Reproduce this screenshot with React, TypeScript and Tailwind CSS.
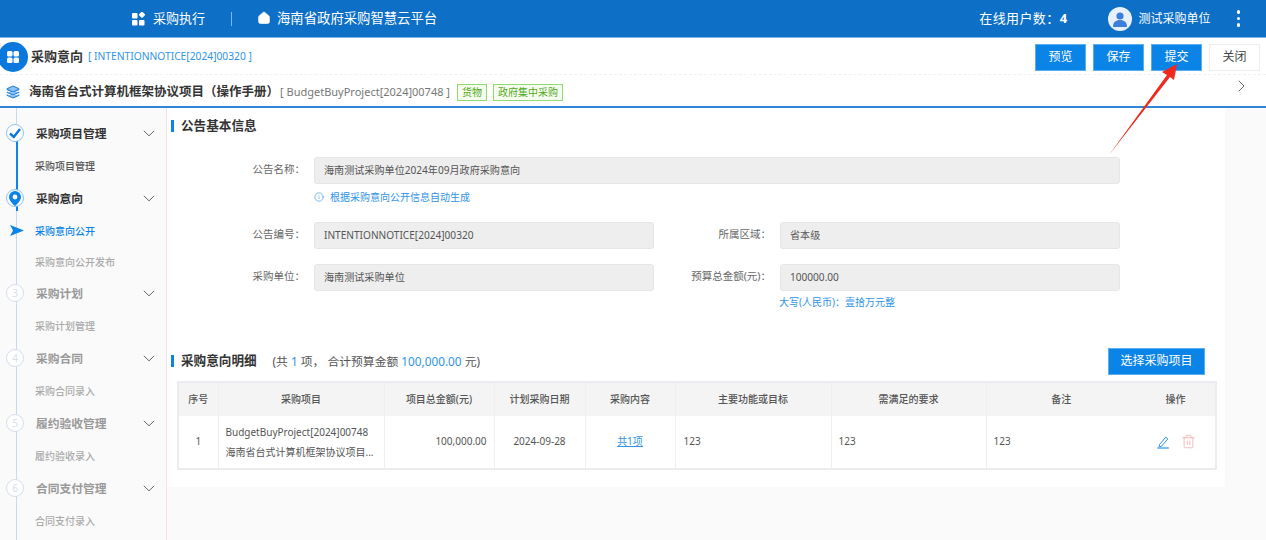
import React from "react";
import { Layers, Home, Trash2, Info } from "lucide-react";

const font = { fontFamily: '"Noto Sans","Noto Sans CJK SC",sans-serif' };

function Chevron({ className = "" }: { className?: string }) {
  return (
    <svg width="12" height="7" viewBox="0 0 12 7" fill="none" stroke="#666" strokeWidth="1" className={className}>
      <path d="M0.8 0.8 6 5.8l5.2-5" />
    </svg>
  );
}

function Step({ n, title, active, icon }: { n: string; title: string; active?: boolean; icon?: React.ReactNode }) {
  return (
    <div className="relative flex h-[33px] items-center pl-[36px] pr-[11px]">
      <div
        className={`absolute left-[6px] top-[7px] flex h-[18px] w-[18px] items-center justify-center rounded-full border bg-white text-[10px] ${
          active ? "border-[#8cc4f5]" : "border-[#d5deee] text-[#d5deee]"
        }`}
      >
        {icon ?? n}
      </div>
      <span className={`flex-1 text-[11.75px] font-bold ${active ? "text-[#333]" : "text-[#999]"}`}>{title}</span>
      <Chevron />
    </div>
  );
}

function Sub({ text, state, h = 32 }: { text: string; state?: "on" | "dark"; h?: number }) {
  return (
    <div
      className={`flex items-center pl-[35px] text-[10px] font-medium ${
        state === "on" ? "text-[#0a84e6]" : state === "dark" ? "text-[#555]" : "text-[#aaa]"
      }`}
      style={{ height: h }}
    >
      {text}
    </div>
  );
}

function Field({ label, value, wide }: { label: string; value: string; wide?: boolean }) {
  return (
    <div className="flex items-start">
      <div className="w-[143px] pr-[9px] pt-[5px] text-right text-[10.5px] text-[#666]">{label}：</div>
      <div
        className={`flex h-[27px] items-center rounded-[3px] border border-[#e6e6e6] bg-[#eeeeee] pl-[9px] text-[10.1px] text-[#555] ${
          wide ? "w-[806px]" : "w-[340px]"
        }`}
      >
        {value}
      </div>
    </div>
  );
}

function Title({ children }: { children: React.ReactNode }) {
  return (
    <div className="flex items-center gap-[7px]">
      <span className="h-[12px] w-[3px] bg-[#0a84e6]" />
      <span className="text-[12.6px] font-bold text-[#333]">{children}</span>
    </div>
  );
}

function Btn({ text, light }: { text: string; light?: boolean }) {
  return (
    <button
      className={`flex h-[27px] w-[51px] items-center justify-center text-[12px] ${
        light ? "border border-[#eeeeee] bg-white text-[#444]" : "border border-[#5aaef0] bg-[#0a84e6] text-white"
      }`}
    >
      {text}
    </button>
  );
}

const th = "border-r border-[#eeeff3] font-medium text-center";
const td = "border-r border-[#eeeff3]";

export default function App() {
  return (
    <div className="relative flex h-[540px] w-[1266px] flex-col overflow-hidden bg-[#fafafa]" style={font}>
      {/* top bar */}
      <header className="flex h-[38px] shrink-0 items-center border-b border-[#7ab8ee] bg-[#0d6fc6] text-white">
        <div className="ml-[132px] flex items-center gap-[7px] text-[13px]">
          <svg width="14" height="14" viewBox="0 0 14 14" fill="#fff">
            <rect x="0" y="1" width="5.5" height="5.5" rx="1" />
            <rect x="7.6" y="0.4" width="4.8" height="4.8" rx="1" transform="rotate(45 10 2.8)" />
            <rect x="0" y="8" width="5.5" height="5.5" rx="1" />
            <rect x="7" y="8" width="5.5" height="5.5" rx="1" />
          </svg>
          采购执行
        </div>
        <span className="ml-[26px] h-[14px] w-px bg-[#7ab8ee]" />
        <div className="ml-[25px] flex items-center gap-[6px] text-[13.35px]">
          <Home size={14} fill="#fff" strokeWidth={1.5} />
          海南省政府采购智慧云平台
        </div>
        <div className="ml-auto flex items-center">
          <span className="text-[13px] tracking-[0.4px]">
            在线用户数：<span className="font-bold">4</span>
          </span>
          <span className="relative ml-[41px] flex h-[24px] w-[24px] items-center justify-center overflow-hidden rounded-full bg-[#e8f1fb]">
            <svg width="20" height="20" viewBox="0 0 20 20" fill="#3a7fdc">
              <circle cx="10" cy="7" r="3.6" />
              <path d="M3 18c0-5 3-7 7-7s7 2 7 7z" />
            </svg>
          </span>
          <span className="ml-[6px] text-[12px]">测试采购单位</span>
          <span className="ml-[26px] mr-[26px] flex flex-col gap-[3px]">
            <i className="block h-[3.5px] w-[3.5px] rounded-full bg-white" />
            <i className="block h-[3.5px] w-[3.5px] rounded-full bg-white" />
            <i className="block h-[3.5px] w-[3.5px] rounded-full bg-white" />
          </span>
        </div>
      </header>

      {/* title row */}
      <div className="relative flex h-[37px] shrink-0 items-center border-b border-dashed border-[#f0f0f0] bg-white pt-[2px]">
        <span className="absolute left-[-2px] top-[4px] flex h-[30px] w-[30px] items-center justify-center rounded-full bg-[#0a78dc]">
          <svg width="14" height="14" viewBox="0 0 14 14" fill="#fff">
            <rect x="1" y="1" width="5.5" height="5.5" rx="1.5" />
            <rect x="7.5" y="1" width="5.5" height="5.5" rx="1.5" />
            <rect x="1" y="7.5" width="5.5" height="5.5" rx="1.5" />
            <rect x="7.5" y="7.5" width="5.5" height="5.5" rx="1.5" />
          </svg>
        </span>
        <span className="ml-[31px] text-[13px] font-bold text-[#333]">采购意向</span>
        <span className="ml-[5px] text-[10.25px] text-[#2f93e8]">[ INTENTIONNOTICE[2024]00320 ]</span>
        <div className="ml-auto mr-[6px] flex gap-[7px]">
          <Btn text="预览" />
          <Btn text="保存" />
          <Btn text="提交" />
          <Btn text="关闭" light />
        </div>
      </div>

      {/* project row */}
      <div className="flex h-[33px] shrink-0 items-center border-b-2 border-[#2f86d6] bg-white pt-[3px]">
        <Layers size={14} className="ml-[6px] text-[#2f86d6]" fill="#8cc4f5" />
        <span className="ml-[9px] text-[12.5px] font-bold text-[#333]">海南省台式计算机框架协议项目（操作手册）</span>
        <span className="ml-[1px] text-[11px] text-[#777]">[ BudgetBuyProject[2024]00748 ]</span>
        <span className="ml-[7px] border border-[#8fdc6e] bg-[#f6fdf0] px-[4px] text-[10px] leading-[15px] text-[#52a820]">货物</span>
        <span className="ml-[6px] border border-[#8fdc6e] bg-[#f6fdf0] px-[4px] text-[10px] leading-[15px] text-[#52a820]">政府集中采购</span>
        <span className="ml-auto mr-[21px] -translate-y-[6px]">
          <svg width="7" height="12" viewBox="0 0 7 12" fill="none" stroke="#666" strokeWidth="1">
            <path d="M0.8 0.8 6 6l-5.2 5.2" />
          </svg>
        </span>
      </div>

      <div className="flex min-h-0 flex-1 items-start">
        {/* sidebar */}
        <aside className="relative h-full w-[167px] shrink-0 border-r border-[#f3e3e0] bg-[#fafafa] pt-[9px]">
          <span className="absolute bottom-0 left-[16px] top-0 w-px bg-[#ccd8ec]" />
          <span className="absolute left-[16px] top-[28px] h-[75px] w-[2px] bg-[#0a84e6]" />
          <Step
            n="1"
            title="采购项目管理"
            active
            icon={
              <svg width="14" height="13" viewBox="0 0 14 13" fill="none" stroke="#0a78dc" strokeWidth="2.4">
                <path d="M2 6.5 5.8 10 12 2" />
              </svg>
            }
          />
          <Sub text="采购项目管理" state="dark" />
          <Step
            n="2"
            title="采购意向"
            active
            icon={
              <svg width="12" height="15" viewBox="0 0 12 15">
                <path
                  fill="#0a84e6"
                  fillRule="evenodd"
                  d="M6 0a6 6 0 0 1 6 6c0 3.6-3.6 6.8-6 9-2.4-2.2-6-5.4-6-9a6 6 0 0 1 6-6zm0 3.6a2.4 2.4 0 1 0 0 4.8 2.4 2.4 0 0 0 0-4.8z"
                />
              </svg>
            }
          />
          <div className="relative">
            <svg width="14" height="11" viewBox="0 0 14 11" fill="#0a84e6" className="absolute left-[10px] top-[10px]">
              <path d="M0 0 14 5.5 0 11 3 5.5z" />
            </svg>
            <Sub text="采购意向公开" state="on" />
          </div>
          <Sub text="采购意向公开发布" h={30} />
          <Step n="3" title="采购计划" />
          <Sub text="采购计划管理" />
          <Step n="4" title="采购合同" />
          <Sub text="采购合同录入" />
          <Step n="5" title="履约验收管理" />
          <Sub text="履约验收录入" />
          <Step n="6" title="合同支付管理" />
          <Sub text="合同支付录入" />
        </aside>

        {/* main */}
        <main className="h-[379px] w-[1058px] shrink-0 bg-white pl-[4px] pt-[9px]">
          <Title>公告基本信息</Title>

          <div className="mt-[21px]">
            <Field label="公告名称" value="海南测试采购单位2024年09月政府采购意向" wide />
            <div className="mt-[6px] flex items-center pl-[143px] text-[10px] leading-[14px] text-[#2f93e8]">
              <Info size={10} strokeWidth={1.5} />
              <span className="ml-[6px]">根据采购意向公开信息自动生成</span>
            </div>
            <div className="mt-[18px] flex">
              <Field label="公告编号" value="INTENTIONNOTICE[2024]00320" />
              <div className="-ml-[17px]">
                <Field label="所属区域" value="省本级" />
              </div>
            </div>
            <div className="mt-[15px] flex">
              <Field label="采购单位" value="海南测试采购单位" />
              <div className="-ml-[17px]">
                <Field label="预算总金额(元)" value="100000.00" />
              </div>
            </div>
            <div className="mt-[4px] pl-[608px] text-[10px] leading-[14px] text-[#2f93e8]">大写(人民币)：壹拾万元整</div>
          </div>

          <div className="mt-[39px] flex h-[27px] items-center pr-[20px]">
            <Title>采购意向明细</Title>
            <span className="ml-[16px] text-[11.8px] text-[#555]">
              (共 <span className="text-[#2f93e8]">1</span> 项， 合计预算金额{" "}
              <span className="text-[#2f93e8]">100,000.00</span> 元)
            </span>
            <button className="ml-auto flex h-[27px] w-[97px] items-center justify-center border border-[#5aaef0] bg-[#0a84e6] text-[12px] text-white">
              选择采购项目
            </button>
          </div>

          <table className="ml-[6px] mt-[6px] w-[1038px] table-fixed border-2 border-[#ebebf0] text-[10px] text-[#555]">
            <colgroup>
              <col className="w-[40px]" />
              <col className="w-[166px]" />
              <col className="w-[110px]" />
              <col className="w-[91px]" />
              <col className="w-[90px]" />
              <col className="w-[156px]" />
              <col className="w-[155px]" />
              <col className="w-[150px]" />
              <col className="w-[80px]" />
            </colgroup>
            <thead>
              <tr className="h-[34px] bg-[#f4f4f4]">
                <th className={th}>序号</th>
                <th className={th}>采购项目</th>
                <th className={th}>项目总金额(元)</th>
                <th className={th}>计划采购日期</th>
                <th className={th}>采购内容</th>
                <th className={th}>主要功能或目标</th>
                <th className={th}>需满足的要求</th>
                <th className="text-center font-medium">备注</th>
                <th className="text-center font-medium">操作</th>
              </tr>
            </thead>
            <tbody>
              <tr className="h-[53px] bg-white">
                <td className={`${td} text-center`}>1</td>
                <td className={`${td} pl-[7px] leading-[20px]`}>
                  <div>BudgetBuyProject[2024]00748</div>
                  <div className="truncate pr-[8px]">海南省台式计算机框架协议项目...</div>
                </td>
                <td className={`${td} pr-[7px] text-right`}>100,000.00</td>
                <td className={`${td} text-center`}>2024-09-28</td>
                <td className={`${td} text-center text-[#2f93e8] underline`}>共1项</td>
                <td className={`${td} pl-[8px]`}>123</td>
                <td className={`${td} pl-[7px]`}>123</td>
                <td className="pl-[7px]">123</td>
                <td>
                  <div className="flex items-center justify-center gap-[11px]">
                    <svg width="14" height="14" viewBox="0 0 14 14" fill="none" stroke="#2f93e8" strokeWidth="1">
                      <path d="M3.5 9.5 9.8 2.2l2 1.8-6.3 7.2-2.4.6z" />
                      <path d="M1.2 13h11.6" strokeWidth="1.2" />
                    </svg>
                    <Trash2 size={15} strokeWidth={1.1} className="text-[#f59a9a]" />
                  </div>
                </td>
              </tr>
            </tbody>
          </table>
        </main>
      </div>

      {/* annotation arrow */}
      <svg className="pointer-events-none absolute left-[1100px] top-[60px]" width="90" height="100" viewBox="0 0 90 100">
        <path d="M9 95 67 15 62 12 77 4 74 20 70 17z" fill="#f0281e" />
      </svg>
    </div>
  );
}
